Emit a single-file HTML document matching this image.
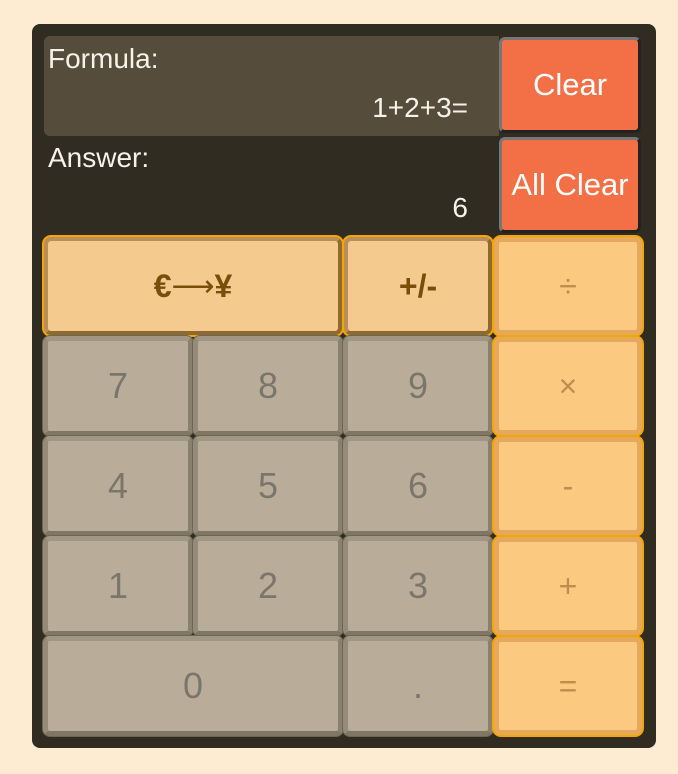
<!DOCTYPE html>
<html><head><style>
*{box-sizing:border-box;margin:0;padding:0}
body{width:678px;height:774px;background:#feecd2;font-family:"Liberation Sans",sans-serif;position:relative;overflow:hidden}
.panel{position:absolute;left:32px;top:24px;width:624px;height:724px;background:#312c22;border-radius:8px}
.formula{position:absolute;left:44px;top:36px;width:455px;height:100px;background:#554c3b;border-radius:6px 0 0 6px}
.lbl{position:absolute;color:#f6f2ea;font-size:28px}
.clr{position:absolute;left:499px;width:142px;height:96px;background:#f37046;border:3px solid;border-color:#777 #222 #222 #777;border-radius:6px;color:#fff;font-size:31px;display:flex;align-items:center;justify-content:center}
.grid{position:absolute;left:43px;top:236px;display:grid;grid-template-columns:150px 150px 150px 150px;grid-template-rows:repeat(5,100px)}
.b{display:flex;align-items:center;justify-content:center;font-size:36px;border-radius:7px}
.n{background:#b9ad9a;border:5px solid;border-color:#a09682 #8a806e #7f7664 #958b78;color:#7b766c;box-shadow:0 0 0 1px #6d6555}
.f{background:#f5ca8e;border:4px solid;border-color:#b88f5c #8f6a30 #8f6a30 #b88f5c;color:#7a4d0a;box-shadow:0 0 0 2px #f7a600;margin:1px;font-size:32px;font-weight:bold}
.o{background:#fbc980;border:5px solid #e5a95d;color:#c08d4e;box-shadow:0 0 0 2px #f7a600;margin:1px;font-size:32px}
.s2{grid-column:span 2}
</style></head><body>
<div class="panel"></div>
<div class="formula"></div>
<div class="lbl" style="left:48px;top:43px">Formula:</div>
<div class="lbl" style="right:210px;top:92px">1+2+3=</div>
<div class="lbl" style="left:48px;top:142px">Answer:</div>
<div class="lbl" style="right:210px;top:192px">6</div>
<div class="clr" style="top:37px">Clear</div>
<div class="clr" style="top:137px">All Clear</div>
<div class="grid">
<div class="b f s2"><span>€</span><span style="font-family:'DejaVu Sans',sans-serif;font-size:30px;font-weight:normal">⟶</span><span>¥</span></div><div class="b f">+/-</div><div class="b o">÷</div>
<div class="b n">7</div><div class="b n">8</div><div class="b n">9</div><div class="b o">×</div>
<div class="b n">4</div><div class="b n">5</div><div class="b n">6</div><div class="b o">-</div>
<div class="b n">1</div><div class="b n">2</div><div class="b n">3</div><div class="b o">+</div>
<div class="b n s2">0</div><div class="b n">.</div><div class="b o">=</div>
</div>
</body></html>
